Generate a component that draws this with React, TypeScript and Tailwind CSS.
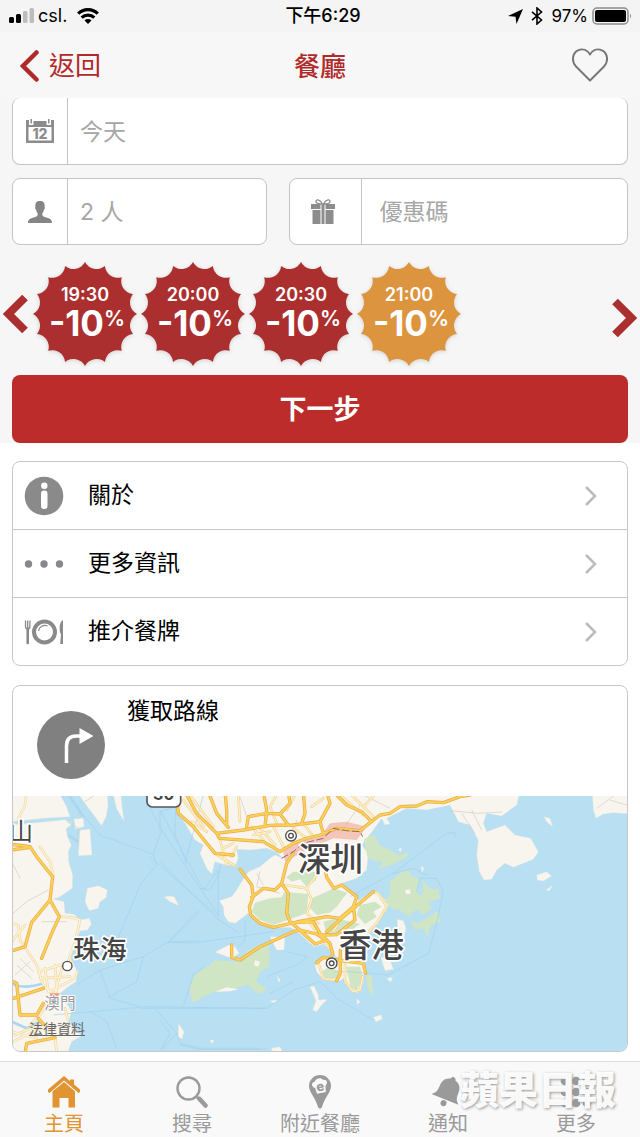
import { ReactNode } from "react";

const SLOTS = [
    { time: "19:30", active: false },
    { time: "20:00", active: false },
    { time: "20:30", active: false },
    { time: "21:00", active: true },
];

// 16-point seal, radius 52, scooped between the tips
const SEAL_PATH = Array.from({ length: 16 }, (_, i) => {
    const angle = (i * Math.PI) / 8;
    const x = (52 + 52 * Math.sin(angle)).toFixed(1);
    const y = (52 - 52 * Math.cos(angle)).toFixed(1);
    return i === 0 ? `M${x} ${y}` : `A13 13 0 0 0 ${x} ${y}`;
}).join(" ") + " A13 13 0 0 0 52 0Z";

function StatusBar() {
    return (
        <div className="grid h-8 grid-cols-[1fr_auto_1fr] items-center bg-[#f4f4f4] px-2 text-[17px] leading-8 text-black">
            <div className="flex items-center gap-1">
                <svg width="26" height="16" viewBox="0 0 26 16" aria-hidden="true">
                    <rect x="1" y="9" width="5" height="6" rx="1.5" fill="#000" />
                    <rect x="8" y="6" width="5" height="9" rx="1.5" fill="#000" />
                    <rect x="15" y="3" width="4.5" height="12" rx="1.5" fill="#bdbdbd" />
                    <rect x="21.500" y="0" width="4.500" height="15" rx="1.5" fill="#bdbdbd" />
                </svg>
                <span className="text-[18px]">csl.</span>
                <svg className="ml-1.5" width="22" height="16" viewBox="0 0 22 16" fill="none" stroke="#000" strokeWidth="3.200" aria-hidden="true">
                    <path d="M1.200 5.600a14 14 0 0 1 19.600 0" />
                    <path d="M4.700 9.700a9 9 0 0 1 12.600 0" />
                    <path d="M7.500 12.500a4.900 4.900 0 0 1 7 0L11 16Z" fill="#000" stroke="none" />
                </svg>
            </div>
            <span className="pl-1.5 text-[18px] font-medium">下午6:29</span>
            <div className="flex items-center justify-end gap-2">
                <svg width="15" height="15" viewBox="0 0 15 15" aria-hidden="true">
                    <path d="M15 0 8.500 15 7.500 7.800 0 7Z" />
                </svg>
                <svg width="12" height="18" viewBox="0 0 12 18" fill="none" stroke="#000" strokeWidth="1.6" aria-hidden="true">
                    <path d="M1 4.800 10.500 13 6 17V1l4.500 4L1 13.200" />
                </svg>
                <span>97%</span>
                <svg className="-ml-1" width="40" height="18" viewBox="0 0 40 18" aria-hidden="true">
                    <rect x="1" y="1" width="35" height="16" rx="4" fill="none" stroke="#8c8c8c" strokeWidth="1.5" />
                    <rect x="3" y="3" width="31" height="12" rx="2" />
                    <path d="M38 6.500q2 2.500 0 5Z" fill="#8c8c8c" />
                </svg>
            </div>
        </div>
    );
}

function NavBar() {
    return (
        <div className="grid h-[66px] grid-cols-[1fr_auto_1fr] items-center bg-[#f7f7f7] px-5">
            <button type="button" className="flex items-center gap-2.5 pt-0.5 text-[26px] leading-8 text-[#b02a2a]">
                <svg width="19" height="32" viewBox="0 0 19 32" fill="none" stroke="currentColor" strokeWidth="4.500" strokeLinecap="round" aria-hidden="true">
                    <path d="M16.500 2.500 3 16l13.500 13.500" />
                </svg>
                返回
            </button>
            <h1 className="pt-1 text-[26px] font-medium leading-8 text-[#b02a2a]">餐廳</h1>
            <button type="button" aria-label="收藏" className="mr-3 justify-self-end">
                <svg width="36" height="34" viewBox="0 0 36 34" fill="none" stroke="#777" strokeWidth="2" strokeLinejoin="round" aria-hidden="true">
                    <path d="M18 32.500 4 18.500C-1 13 .500 5 6 2.300 11 .200 15.500 2.300 18 6.500 20.500 2.300 25 .200 30 2.300 35.500 5 37 13 32 18.500Z" />
                </svg>
            </button>
        </div>
    );
}

function Field({ placeholder, icon, className = "", wide = false }: {
    placeholder: string;
    icon: ReactNode;
    className?: string;
    wide?: boolean;
}) {
    return (
        <label className={`flex h-[67px] min-w-0 overflow-hidden rounded-lg border border-[#c4c4c4] bg-white ${className}`}>
            <span className={`flex shrink-0 items-center justify-center border-r border-[#c4c4c4] ${wide ? "w-[72px] pr-1" : "w-[55px]"}`}>
                {icon}
            </span>
            <input
                type="text"
                aria-label={placeholder}
                placeholder={placeholder}
                className={`min-w-0 flex-1 bg-transparent pt-0.5 text-[23px] text-[#555] outline-none placeholder:text-[#a6a6a6] ${wide ? "px-[18px]" : "px-3"}`}
            />
        </label>
    );
}

function CalendarIcon() {
    return (
        <svg width="28" height="24" viewBox="0 0 28 24" aria-hidden="true">
            <path d="M0 1h3v5h22V1h3v23H0ZM2.500 8v13.500h23V8Z" fill="#8c8c8c" fillRule="evenodd" />
            <path d="M7.500 2h13v4h-13Z" fill="#8c8c8c" />
            <path d="M5.200 0v4.500M22.800 0v4.500" stroke="#8c8c8c" strokeWidth="1.500" />
            <text x="14" y="20" textAnchor="middle" fontSize="14" fontWeight="800" fill="#8c8c8c">12</text>
        </svg>
    );
}

function PersonIcon() {
    return (
        <svg width="24" height="22" viewBox="0 0 24 22" fill="#858585" aria-hidden="true">
            <path d="M12 0c3.300 0 5 2 4.600 5.500.600 1.500 0 2.800-.700 3.300-.400 2-1 3-1.600 3.700 0 3 1 3 4.200 4 3.500 1 5.500 2 5.500 5.500H0c0-3.500 2-4.500 5.500-5.500 3.200-1 4.200-1 4.200-4-.600-.700-1.200-1.700-1.600-3.700-.700-.500-1.300-1.800-.700-3.300C7 2 8.700 0 12 0Z" />
        </svg>
    );
}

function GiftIcon() {
    return (
        <svg width="24" height="26" viewBox="0 0 24 26" aria-hidden="true">
            <path d="M11.500 5C9 0 4.500 0 5 2.800 5.300 4.200 8 5 11.500 5ZM12.500 5C15 0 19.500 0 19 2.800 18.700 4.200 16 5 12.500 5Z" fill="none" stroke="#8c8c8c" strokeWidth="1.300" />
            <path d="M0 5h9.500v5H0ZM14.500 5H24v5h-9.500ZM1.500 11h8v14h-8ZM14.500 11h8v14h-8ZM10.500 5h3v20h-3Z" fill="#8c8c8c" />
        </svg>
    );
}

function SlotBadge({ time, active }: { time: string; active: boolean }) {
    return (
        <button type="button" className="relative flex size-[104px] flex-col items-center pt-[23px] text-white">
            <svg className="absolute inset-0 drop-shadow-sm" width="104" height="104" viewBox="0 0 104 104" aria-hidden="true">
                <path d={SEAL_PATH} fill={active ? "#dc943f" : "#ab2f2f"} />
            </svg>
            <span className="relative text-[18px] font-semibold leading-5">{time}</span>
            <span className="relative flex items-start pl-1 leading-9">
                <span className="text-[35px] font-bold">-10</span>
                <span className="text-[21px] font-semibold leading-7">%</span>
            </span>
        </button>
    );
}

function InfoIcon() {
    return (
        <svg width="40" height="40" viewBox="0 0 40 40" aria-hidden="true">
            <circle cx="20" cy="20" r="19.300" fill="#8a8a8a" />
            <circle cx="20.300" cy="9.800" r="3.200" fill="#fff" />
            <rect x="17" y="14.500" width="6.500" height="18.500" rx="3.200" fill="#fff" />
        </svg>
    );
}

function DotsIcon() {
    return (
        <svg width="40" height="40" viewBox="0 0 40 40" fill="#85888d" aria-hidden="true">
            <circle cx="4.500" cy="20" r="3.700" />
            <circle cx="20" cy="20" r="3.700" />
            <circle cx="35.500" cy="20" r="3.700" />
        </svg>
    );
}

function PlateIcon() {
    return (
        <svg width="40" height="40" viewBox="0 0 40 40" fill="none" stroke="#8a8a8a" aria-hidden="true">
            <circle cx="20.500" cy="20" r="10.500" strokeWidth="4" />
            <path d="M14.500 19a6.500 6.500 0 0 1 9-5" strokeWidth="1.200" />
            <path d="M1.500 8.500v6q0 2.500 2.200 2.500t2.200-2.500v-6M3.700 8.500v8" strokeWidth="1.300" />
            <path d="M3.700 16.500V31" strokeWidth="2.600" strokeLinecap="round" />
            <path d="M39 32V8c-3 1.500-4 6-3 12.500l1 1.500-.800 10Z" fill="#8a8a8a" stroke="none" />
        </svg>
    );
}

function MenuRow({ label, icon }: { label: string; icon: ReactNode }) {
    return (
        <li>
            <button type="button" className="flex h-[67px] w-full items-center pl-[11px] pr-[30px] text-left text-[23px] leading-8 text-black">
                {icon}
                <span className="ml-6 flex-1 pb-0.5">{label}</span>
                <svg width="13" height="20" viewBox="0 0 13 20" fill="none" stroke="#bcbcbc" strokeWidth="2.500" aria-hidden="true">
                    <path d="m2 1 9 9-9 9" />
                </svg>
            </button>
        </li>
    );
}

const WEST_LAND = [
    "M30 350H175L200 395 210 425 130 430 75 436 30 440Z",
    "M30 450 130 441 195 434 216 447 198 462 203 485 214 510 205 530 206 560 218 600 217 640 180 665 160 672 192 680 195 715 222 718 240 735 268 730 274 748 262 765 240 768 232 790 222 805 212 850 232 890 228 920 205 935 180 955 200 985 215 1010 205 1040 245 1082 215 1100 200 1140H30Z",
    "M230 350H322L324 395 318 425 305 452 285 425 272 408 255 385Z",
    "M338 350H362L366 395 372 438 350 402Z",
    "M222 432 250 430 252 455 226 462ZM240 466 270 462 276 540 235 542Z",
    "M262 640 295 632 322 645 318 668 300 680 295 700 268 707 255 680Z",
    "M492 666 520 665 537 692 510 680Z",
];

const LAND = [
    "M45 5 50 60 75 100 105 150 130 165 120 190 140 235 155 252 165 215 185 222 225 228 235 205 230 178 270 180 320 175 350 185 368 205 345 195 330 205 300 230 265 245 245 275 230 300 215 320 178 332 190 350 192 375 205 395 225 400 265 370 275 370 300 400 340 414 390 412 410 422 440 450 462 470 490 462 515 485 530 500 560 510 570 480 620 450 640 410 680 360 686 340 655 310 640 303 595 332 570 300 545 280 590 265 620 240 625 190 605 165 640 120 665 85 675 105 690 101 680 85 700 75 740 55 800 60 870 45 895 95 930 105 955 150 950 195 958 245 972 270 995 268 1010 240 1035 220 1060 232 1120 208 1135 185 1112 145 1065 135 1050 120 1035 105 980 125 970 100 980 70 1025 78 1070 45 1080 5Z",
    "M1297 5 1300 60 1308 85 1330 72 1360 68 1420 73V5Z",
    "M1152 80 1170 85 1178 110 1160 95ZM1130 255 1160 245 1175 258 1150 273 1132 270ZM1158 300 1178 285 1168 303Z",
    "M165 487 200 468 218 462 238 490 215 505ZM330 440 375 440 372 480 350 480Z",
    "M465 525 495 505 545 515 560 508 615 518 610 580 592 608 572 602 555 562 540 572 490 570 470 545Z",
    "M712 388 730 392 738 415 730 452 712 430ZM662 500 690 510 700 538 675 542ZM450 590 462 588 475 615 476 630 502 628 485 645 470 665 458 660 468 632Z",
    "M640 682 662 674 668 686 648 696ZM55 700 72 725 66 748 55 740ZM18 318 42 320 54 342 35 337ZM680 565 698 562 692 577ZM335 775 360 770 370 790H335ZM783 228 792 235 786 248ZM150 750 162 750 156 762ZM590 625 600 635 592 645ZM350 556 362 572 356 576ZM330 632 354 630 342 640ZM715 178 725 172 722 186Z",
];

const GREEN = [
    "M612 148 640 133 652 148 658 165 690 180 715 195 750 188 735 205 700 222 655 238 668 215 640 212 622 200Z",
    "M675 335 692 305 688 275 705 262 720 250 745 238 755 262 765 258 780 272 770 290 775 318 790 305 788 270 802 285 815 300 835 295 840 325 805 335 815 355 790 375 770 358 745 380 720 360 700 358Z",
    "M750 390 775 398 800 385 835 362 842 395 815 405 800 440 790 415 765 420Z",
    "M88 600 100 565 110 550 150 525 165 510 230 515 265 480 300 465 325 460 330 490 328 530 300 545 288 575 322 598 295 612 262 585 210 600 165 605 130 620 98 638Z",
    "M285 338 330 325 365 322 372 305 445 312 440 370 390 388 340 405 300 390 275 365Z",
    "M455 325 500 305 520 295 562 308 545 330 530 350 510 368 470 375 448 352Z",
    "M378 262 400 245 470 245 468 270 440 290 420 268 395 275Z",
    "M600 345 645 335 665 350 640 365 650 380 615 402 590 375Z",
    "M490 395 530 385 600 402 560 430 500 432Z",
    "M483 545 510 530 540 545 535 565 497 565ZM558 530 600 530 610 560 590 602 572 592ZM615 545 635 560 642 618 625 600Z",
];

const MAJOR_ROADS = [
    "M48 5 55 70 100 110 140 160 165 190 220 195",
    "M75 5 110 70 170 130 250 120 330 106 400 105 480 95 510 40 500 5",
    "M170 130 178 145 310 155 360 185 400 160 440 145 480 135 530 115 600 122 640 90 660 75 690 70 720 50 770 48 800 35 850 38 900 20 930 15",
    "M310 5 320 60 315 110M430 5 435 70 425 100M195 5 200 60 200 105M260 110 265 80 320 70 360 72 390 40 385 5M360 72 385 105M145 5 170 70 205 112",
    "M520 5 560 45 605 65 635 95M480 95 490 130",
    "M240 238 275 285 280 320 268 350 272 375 300 400 340 412 410 396 500 380 540 385 580 350 590 320 545 285 522 295 500 262 495 230",
    "M275 322 310 295 345 300 365 280 380 220 400 190",
    "M368 285 385 310 380 370 390 395 410 412 465 462 500 450M500 425 545 385 640 305",
    "M215 465V502L240 510 300 470 400 425 420 420",
    "M400 398 460 395 480 430 510 460 518 490 505 520M480 435 530 434 585 390 580 350M420 420 470 432 490 445",
    "M470 518 490 502 540 512M545 512 610 520 617 550M541 480V550L530 572",
];

const MINOR_ROADS = [
    "M70 30 130 110M90 15 160 110M95 95 140 125M165 190 225 228M180 150 200 225M215 200 230 170M190 175 220 160",
    "M235 15 240 95M350 15 330 50 350 100M405 15 380 60M455 50 490 25M275 110 310 150M300 115 345 165M340 110 370 170M400 115 440 145M430 100 460 140M280 135 330 125",
    "M545 20 610 75M575 15 640 80M640 20 610 50",
    "M375 285 440 295 480 240M440 295 455 330 440 370 475 400",
    "M640 305 655 310 680 350 650 400 625 425M540 390 520 425M450 400 520 490",
    "M475 520 490 566 530 570M555 520 555 575 580 605 600 600 608 560",
];

const GREY_ROADS = "M290 250 310 285M300 245 290 290 360 310M540 130 600 45M610 15 690 55M870 62 955 70 1025 66M905 70 945 130M935 60 965 120M1310 55 1365 15M1350 30 1400 45M240 20 260 80M400 130 410 90";

const FERRY_LINES = "M0 215 170 385 235 428M20 458H110L340 425M130 15 75 220M0 60 130 300 175 240V380M255 390V450L235 470M110 365 25 455M70 650 100 555 130 530M-60 655H320L400 600 480 575 530 625 640 690M380 485 440 500 420 520 320 560M330 610 400 575M0 690 30 730 0 785M60 765 120 778H320M525 545 570 545 685 555 805 490 830 400 850 305 830 265 780 265 770 305M570 320 700 250 860 130 885 128V142M700 250 760 235 800 255";

function RoadLayer({ lines, casing, fill, width }: { lines: string[]; casing: string; fill: string; width: number }) {
    const d = lines.join(" ");
    return (
        <g fill="none" strokeLinejoin="round" strokeLinecap="round">
            <path d={d} stroke={casing} strokeWidth={width + 4} />
            <path d={d} stroke={fill} strokeWidth={width} />
        </g>
    );
}

function RegionMap() {
    return (
        <svg className="block h-auto w-full bg-[#b8dff2]" viewBox="0 0 1842 765" role="img" aria-label="地圖">
            {/* Pearl River west bank */}
            <g transform="translate(-39 -363)">
                <path d={WEST_LAND.join(" ")} fill="#f8f5ee" stroke="#dfe3da" strokeWidth="1" />
                <path d="M35 925Q70 945 130 925M35 1040 80 1060 120 1040M205 480 235 500M200 350 250 425" fill="none" stroke="#a9d8f0" strokeWidth="8" />
                <path d="M39 715 80 680 145 645M50 870 95 910M45 900 90 860M60 850 100 890M125 740H200M200 440 235 460 230 505M255 380 285 360M35 560 60 610" fill="none" stroke="#cfccc6" strokeWidth="2" />
                <path d="M228 395 300 480 460 538 485 465 440 380M460 538 470 570 420 630 350 800M480 465V410L530 395M527 395 525 480 560 565M485 465 600 640 655 720M510 800 600 708M450 545 650 720M600 640 630 645 660 590V430M230 930 300 885 430 845 505 800 600 798M430 845 410 920 320 970M300 885 330 970 420 995 800 1000M160 1020 420 997M270 1010 320 1040 350 1120M465 1000 530 1075 485 1125M530 1075 540 1105 600 1120H780" fill="none" stroke="#a0d2f1" strokeWidth="2" />
                <RoadLayer
                    lines={[
                        "M80 350 75 390 55 430 68 490",
                        "M178 725 215 727 240 735 228 790 205 860M35 745 55 750 60 795 110 870 130 930 160 960M35 800 75 750M115 890 215 860M120 910 210 905M135 880 145 950M165 870 170 950M190 865 160 970M195 1000 205 1040M45 1080 130 1045 165 1090M165 1085 170 1130M90 1050 120 1020 140 990M40 1100 120 1060M35 1070 110 1090M150 950 225 910 232 890M120 515 150 560 160 600",
                    ]}
                    casing="#ecd9ae"
                    fill="#fff3cf"
                    width={4}
                />
                <RoadLayer
                    lines={[
                        "M35 508 90 515 110 545 158 605 150 675 105 730 95 742 75 815 35 828M35 525 90 517",
                        "M150 675 178 725 155 775 125 850M35 918 50 925 60 1020 110 1020 130 985M35 972 130 940",
                        "M75 1135 80 1105 165 1088M115 1030 130 1048",
                    ]}
                    casing="#e8a94d"
                    fill="#fbd155"
                    width={6}
                />
                <path d="M150 955 180 955 170 970 150 965Z" fill="#ee9c8f" />
            </g>

            {/* Shenzhen, Hong Kong and the islands */}
            <g transform="translate(441 -18)">
                <path d={LAND.join(" ")} fill="#f8f5ee" stroke="#dfe3da" strokeWidth="1" />
                <path d={GREEN.join(" ")} fill="#d0e5c4" />
                <path d="M165 605 200 592 235 598 210 604ZM285 510 300 515 295 530 282 525ZM735 300 750 298 752 312 738 312Z" fill="#f8f5ee" />
                <path d={FERRY_LINES} fill="none" stroke="#a0d2f1" strokeWidth="2" />
                <path d={GREY_ROADS} fill="none" stroke="#cfccc6" strokeWidth="2" />
                <path d="M370 185 400 160 480 140 510 100 560 95 620 110 590 150 520 145 430 185 375 215Z" fill="#f1aa9f" opacity="0.65" />
                <RoadLayer lines={MINOR_ROADS} casing="#ecd399" fill="#fff0c4" width={4} />
                <RoadLayer lines={MAJOR_ROADS} casing="#e8a94d" fill="#fbd155" width={6} />
                <path d="M365 205 400 185 430 160 490 145 520 115 560 122 600 125 608 140" fill="none" stroke="#8c6864" strokeWidth="3" strokeDasharray="22 8" />
            </g>

            {/* Highway shield, half off the top edge */}
            <rect x="402" y="-63" width="101" height="96" rx="16" fill="#fff" stroke="#555" strokeWidth="5" />
            <text x="452" y="11" textAnchor="middle" fontSize="48" fontWeight="700" fill="#444">30</text>

            <g fill="#fff" stroke="#4d4d4d" strokeWidth="4">
                <circle cx="163" cy="510" r="14" />
                <circle cx="834" cy="119" r="16" />
                <circle cx="834" cy="119" r="7" />
                <circle cx="956" cy="502" r="16" />
                <circle cx="956" cy="502" r="7" />
            </g>
            <g fill="#454545" stroke="#fff" strokeWidth="10" strokeLinejoin="round" paintOrder="stroke" fontWeight="500">
                <text x="-12" y="133" fontSize="72" fontWeight="400">山</text>
                <text x="854" y="225" fontSize="98">深圳</text>
                <text x="977" y="482" fontSize="98">香港</text>
                <text x="181" y="490" fontSize="80">珠海</text>
                <text x="94" y="640" fontSize="47" fill="#999" strokeWidth="5" fontWeight="400">澳門</text>
            </g>
        </svg>
    );
}

function HomeIcon() {
    return (
        <svg width="32" height="32" viewBox="0 0 32 32" fill="currentColor" aria-hidden="true">
            <path d="M16 0 22 5V3.500h4V8.500L32 13.500V16l-1.500 1L16 4.500 1.500 17 0 16v-2.500Z" />
            <path d="M16 6 27 15.500V31.500H20.500V22h-9v9.500H4.500V15.500Z" />
        </svg>
    );
}

function SearchIcon() {
    return (
        <svg width="32" height="32" viewBox="0 0 32 32" fill="none" stroke="currentColor" aria-hidden="true">
            <circle cx="12.500" cy="12.500" r="11" strokeWidth="2.400" />
            <path d="m21 21 1.500 1.500" strokeWidth="3" />
            <path d="m23.500 23 6 6.500" strokeWidth="4.500" strokeLinecap="round" />
        </svg>
    );
}

function PinIcon() {
    return (
        <svg width="22" height="34" viewBox="0 0 22 34" aria-hidden="true">
            <path d="M11 0a11 11 0 0 1 11 11c0 6-6 11-9 21q-2 3.500-4 0C6 22 0 17 0 11A11 11 0 0 1 11 0Z" fill="currentColor" />
            <g transform="rotate(-12 11 11)">
                <path d="M6.500 18 5.800 12C2 10 3 5.500 6.800 5.800 8 2.500 14 2.500 15.300 5.800 19 5.500 20 10 16.300 12L15.500 18Z" fill="#f9f9f9" />
                <text x="11" y="16" textAnchor="middle" fontSize="13" fontWeight="800" fill="currentColor">e</text>
            </g>
        </svg>
    );
}

function BellIcon() {
    return (
        <svg width="32" height="32" viewBox="0 0 32 32" fill="currentColor" aria-hidden="true">
            <g transform="rotate(22 16 16)">
                <path d="M16 0c1.500 0 2.500 1 2.500 2.500C24 4 26 8 26 13c0 6 1 8 4.500 11H1.500C5 21 6 19 6 13c0-5 2-9 7.500-10.500C13.500 1 14.500 0 16 0Z" />
                <circle cx="16" cy="28" r="3" />
            </g>
        </svg>
    );
}

function MoreIcon() {
    return (
        <svg width="32" height="32" viewBox="0 0 32 32" fill="currentColor" aria-hidden="true">
            {[5, 16, 27].map((cy) => [5, 16, 27].map((cx) => <circle key={`${cx}-${cy}`} cx={cx} cy={cy} r="4.300" />))}
        </svg>
    );
}

const TABS = [
    { label: "主頁", icon: <HomeIcon />, active: true },
    { label: "搜尋", icon: <SearchIcon />, active: false },
    { label: "附近餐廳", icon: <PinIcon />, active: false },
    { label: "通知", icon: <BellIcon />, active: false },
    { label: "更多", icon: <MoreIcon />, active: false },
];

export default function App() {
    return (
        <div className="flex min-h-screen flex-col bg-white font-['Inter','Noto_Sans_CJK_TC',sans-serif]">
            <header>
                <StatusBar />
                <NavBar />
            </header>

            <main>
                <form className="bg-[#f6f6f6]" onSubmit={(e) => e.preventDefault()}>
                    <div className="px-3">
                        <Field placeholder="今天" icon={<CalendarIcon />} className="border-t-0" />
                        <div className="mt-[13px] grid grid-cols-[3fr_4fr] gap-[22px]">
                            <Field placeholder="2 人" icon={<PersonIcon />} />
                            <Field placeholder="優惠碼" icon={<GiftIcon />} wide />
                        </div>
                    </div>

                    <div className="mt-[17px] flex items-center px-[3px]">
                        <button type="button" aria-label="上一頁" className="mr-[5px] text-[#ab2f2f]">
                            <svg width="25" height="40" viewBox="0 0 25 40" fill="none" stroke="currentColor" strokeWidth="8" aria-hidden="true">
                                <path d="M22 3.500 5.500 20 22 36.500" />
                            </svg>
                        </button>
                        <div className="flex flex-1 gap-1">
                            {SLOTS.map((slot) => (
                                <SlotBadge key={slot.time} {...slot} />
                            ))}
                        </div>
                        <button type="button" aria-label="下一頁" className="pt-2 text-[#ab2f2f]">
                            <svg width="25" height="40" viewBox="0 0 25 40" fill="none" stroke="currentColor" strokeWidth="8" aria-hidden="true">
                                <path d="M3 3.500 19.500 20 3 36.500" />
                            </svg>
                        </button>
                    </div>

                    <div className="mt-[9px] px-3">
                        <button type="submit" className="h-[68px] w-full rounded-lg bg-[#bb2c2b] pt-0.5 text-[27px] font-bold text-white">
                            下一步
                        </button>
                    </div>
                </form>

                <ul className="mx-3 mt-[18px] divide-y divide-[#c8c8c8] rounded-lg border border-[#c8c8c8]">
                    <MenuRow label="關於" icon={<InfoIcon />} />
                    <MenuRow label="更多資訊" icon={<DotsIcon />} />
                    <MenuRow label="推介餐牌" icon={<PlateIcon />} />
                </ul>

                <section className="mx-3 mb-[9px] mt-[19px] overflow-hidden rounded-lg border border-[#c8c8c8]">
                    <button type="button" className="flex h-[110px] w-full items-start pl-6 text-left text-[23px] leading-8 text-black">
                        <svg className="mt-6" width="68" height="70" viewBox="0 0 68 70" aria-hidden="true">
                            <circle cx="34" cy="35" r="34" fill="#808080" />
                            <path d="M29.500 53V36q0-10 10-10h4" fill="none" stroke="#fff" strokeWidth="3.500" />
                            <path d="M42.500 18v16L56.500 26Z" fill="#fff" />
                        </svg>
                        <span className="ml-[22px] mt-[9px]">獲取路線</span>
                    </button>
                    <div className="relative">
                        <RegionMap />
                        <a href="#legal" className="absolute bottom-3 left-4 text-[14px] leading-5 text-[#666] underline">
                            法律資料
                        </a>
                    </div>
                </section>
            </main>

            <footer className="relative mt-auto border-t border-[#dcdcdc] bg-[#f9f9f9]">
                <nav className="grid h-[75px] grid-cols-5">
                    {TABS.map((tab) => (
                        <button
                            key={tab.label}
                            type="button"
                            className={`flex flex-col items-center pt-3 text-[20px] leading-7 ${tab.active ? "text-[#e09432]" : "text-[#9a9a9a]"}`}
                        >
                            <span className="flex h-9 items-center">{tab.icon}</span>
                            {tab.label}
                        </button>
                    ))}
                </nav>
                <span className="pointer-events-none absolute right-6 top-2 text-[39px] font-black leading-10 text-white/95 [text-shadow:1px_1px_3px_#999]">
                    蘋果日報
                </span>
            </footer>
        </div>
    );
}
